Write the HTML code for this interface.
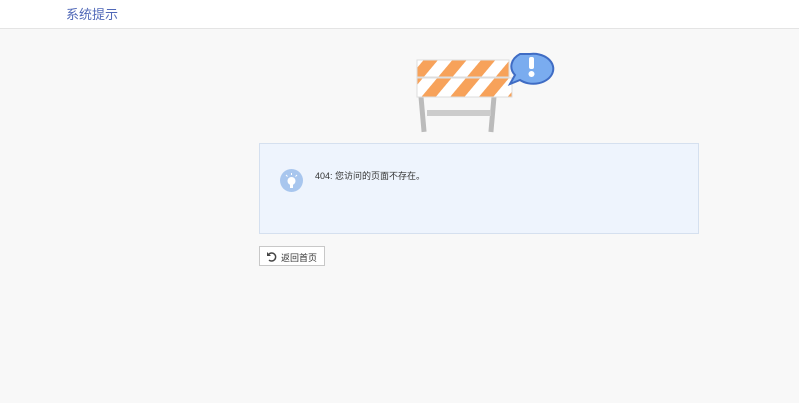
<!DOCTYPE html>
<html><head><meta charset="utf-8"><style>
body{margin:0;width:799px;height:403px;background:#f8f8f8;font-family:"Liberation Sans","Noto Sans CJK SC",sans-serif;position:relative;overflow:hidden}
.hd{position:absolute;left:0;top:0;width:799px;height:28px;background:#fff;border-bottom:1px solid #e4e4e4}
.hd span{position:absolute;left:66px;top:4px;font-size:13px;color:#5068b8}
.box{position:absolute;left:259px;top:143px;width:438px;height:89px;background:#eef4fd;border:1px solid #d5e0ef}
.ic{position:absolute;left:20px;top:25px;width:23px;height:23px;border-radius:50%;background:#a8c6ee}
.msg{position:absolute;left:55px;top:25px;font-size:9px;color:#333}
.btn{position:absolute;left:259px;top:246px;width:64px;height:18px;background:#fff;border:1px solid #c8c8c8;font-size:9px;color:#333}
</style></head><body>
<div class="hd"><span>系统提示</span></div>
<svg style="position:absolute;left:405px;top:48px" width="155" height="92">
<defs><pattern id="st" width="22" height="22" patternUnits="userSpaceOnUse" patternTransform="rotate(40)"><rect width="11" height="22" fill="#f7a25a"/><rect x="11" width="11" height="22" fill="#fff"/></pattern></defs>
<rect x="15" y="48" width="5" height="36" fill="#bbb" transform="rotate(-5 17 66)"/>
<rect x="85" y="48" width="5" height="36" fill="#bbb" transform="rotate(5 87 66)"/>
<rect x="22" y="62" width="64" height="6" fill="#ccc"/>
<rect x="12" y="12" width="92" height="17" fill="url(#st)" stroke="#ddd"/>
<rect x="12" y="30" width="95" height="19" fill="url(#st)" stroke="#ddd"/>
<path d="M125 6 a20 15 0 1 1 -10 26 l-10 4 l5 -9 a20 15 0 0 1 5 -21z" fill="#7aacef" stroke="#3f6cc4" stroke-width="2"/>
<rect x="124" y="9" width="5" height="12" rx="2" fill="#fff"/><circle cx="126.5" cy="26" r="3" fill="#fff"/>
</svg>
<div class="box"><div class="ic"><svg width="23" height="23"><circle cx="11.5" cy="12" r="4" fill="#fff"/><rect x="10" y="15" width="3" height="4" fill="#fff"/><path d="M11.5 4v2M6 6l1.5 1.5M17 6l-1.5 1.5" stroke="#fff" stroke-width="1"/></svg></div><div class="msg">404: 您访问的页面不存在。</div></div>
<div class="btn"><svg style="position:absolute;left:6px;top:4px" width="11" height="11"><path d="M3 3a4 4 0 1 1 0 6" fill="none" stroke="#444" stroke-width="1.5"/><path d="M1 1v4h4z" fill="#444"/></svg><span style="position:absolute;left:21px;top:4px">返回首页</span></div>
</body></html>
